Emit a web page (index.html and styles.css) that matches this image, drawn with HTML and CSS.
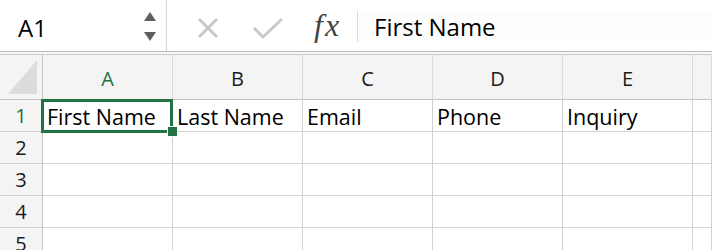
FILE: index.html
```html
<!DOCTYPE html>
<html lang="en">
  <head>
    <meta charset="UTF-8" />
    <meta name="viewport" content="width=device-width, initial-scale=1.0" />
    <title>Contact Sheet</title>
    <link rel="stylesheet" href="styles.css">
  </head>
  <body>
    <!-- Formula bar -->
    <div class="formula-bar">
      <div class="name-box">
        <span class="cell-ref">A1</span>
        <div class="stepper">
          <span class="arrow-up"></span>
          <span class="arrow-down"></span>
        </div>
      </div>
      <div class="formula-tools">
        <svg class="tool-icon" width="24" height="24" viewBox="0 0 24 24">
          <path d="M3 3 L21 21 M21 3 L3 21" stroke="#c9c9c9" stroke-width="3" fill="none" />
        </svg>
        <svg class="tool-icon check" width="32" height="24" viewBox="0 0 32 24">
          <path d="M2 12 L11 21 L30 3" stroke="#c9c9c9" stroke-width="3" fill="none" />
        </svg>
        <span class="fx">fx</span>
      </div>
      <div class="formula-input">First Name</div>
    </div>
    <div class="bar-gap"></div>

    <!-- Sheet grid -->
    <div class="sheet">
      <div class="corner"><span class="corner-mark"></span></div>
      <div class="col-head active">A</div>
      <div class="col-head">B</div>
      <div class="col-head">C</div>
      <div class="col-head">D</div>
      <div class="col-head">E</div>
      <div class="col-head"></div>

      <div class="row-head active">1</div>
      <div class="cell selected">First Name</div>
      <div class="cell">Last Name</div>
      <div class="cell">Email</div>
      <div class="cell">Phone</div>
      <div class="cell">Inquiry</div>
      <div class="cell"></div>

      <div class="row-head">2</div>
      <div class="cell"></div><div class="cell"></div><div class="cell"></div>
      <div class="cell"></div><div class="cell"></div><div class="cell"></div>

      <div class="row-head">3</div>
      <div class="cell"></div><div class="cell"></div><div class="cell"></div>
      <div class="cell"></div><div class="cell"></div><div class="cell"></div>

      <div class="row-head">4</div>
      <div class="cell"></div><div class="cell"></div><div class="cell"></div>
      <div class="cell"></div><div class="cell"></div><div class="cell"></div>

      <div class="row-head">5</div>
      <div class="cell"></div><div class="cell"></div><div class="cell"></div>
      <div class="cell"></div><div class="cell"></div><div class="cell"></div>
    </div>
  </body>
</html>
```

FILE: styles.css
```css
body {
  font-family: "Open Sans", Arial, sans-serif;
  background-color: #fff;
  color: #000;
  margin: 0;
  padding: 0;
  overflow: hidden;
}

/* Formula bar */
.formula-bar {
  display: flex;
  height: 51px;
  border-bottom: 1px solid #b9b9b9;
  background-color: #fff;
}

.name-box {
  width: 167px;
  display: flex;
  align-items: center;
  justify-content: space-between;
  padding: 0 10px 0 18px;
  box-sizing: border-box;
  border-right: 1px solid #d6d6d6;
}

.cell-ref {
  font-size: 24px;
  padding-top: 4px;
}

.stepper {
  display: flex;
  flex-direction: column;
  gap: 11px;
  padding-top: 2px;
}

.arrow-up,
.arrow-down {
  width: 0;
  height: 0;
  border-left: 6px solid transparent;
  border-right: 6px solid transparent;
}

.arrow-up {
  border-bottom: 9px solid #5e5e5e;
}

.arrow-down {
  border-top: 9px solid #5e5e5e;
}

.formula-tools {
  display: flex;
  align-items: center;
  padding-left: 29px;
  width: 190px;
  box-sizing: border-box;
}

.tool-icon {
  margin-top: 4px;
}

.check {
  margin-left: 32px;
}

.fx {
  font-family: "Liberation Serif", "Times New Roman", serif;
  font-style: italic;
  font-size: 32px;
  color: #444;
  margin-left: 30px;
  letter-spacing: 2px;
}

.formula-input {
  flex: 1;
  display: flex;
  align-items: center;
  margin: 11px 0 9px;
  padding-left: 16px;
  border-left: 1px solid #dcdcdc;
  font-size: 24px;
  background-color: #fdfdfd;
}

.bar-gap {
  height: 2px;
  border-bottom: 1px solid #c9c9c9;
  background-color: #f7f7f7;
}

/* Sheet grid */
.sheet {
  display: grid;
  grid-template-columns: 43px repeat(5, 130px) 1fr;
  grid-template-rows: 45px repeat(5, 32px);
}

.corner,
.col-head,
.row-head {
  background-color: #f4f4f4;
  color: #1a1a1a;
  display: flex;
  align-items: center;
  justify-content: center;
  font-size: 20px;
}

.corner {
  position: relative;
  border-right: 1px solid #c2c2c2;
  border-bottom: 1px solid #c2c2c2;
}

.corner-mark {
  position: absolute;
  right: 5px;
  bottom: 5px;
  width: 0;
  height: 0;
  border-left: 29px solid transparent;
  border-bottom: 34px solid #dcdcdc;
}

.col-head {
  border-right: 1px solid #dadada;
  border-bottom: 1px solid #c2c2c2;
  padding-top: 2px;
}

.row-head {
  border-right: 1px solid #c2c2c2;
  border-bottom: 1px solid #d2d2d2;
}

.col-head.active,
.row-head.active {
  color: #217346;
}

.cell {
  border-right: 1px solid #d2d2d2;
  border-bottom: 1px solid #d2d2d2;
  font-size: 21.5px;
  display: flex;
  align-items: center;
  padding: 2px 0 0 4px;
  white-space: nowrap;
}

.cell.selected {
  position: relative;
}

.cell.selected::before {
  content: "";
  position: absolute;
  left: -2px;
  top: -1px;
  right: -1px;
  bottom: -2px;
  border: 3px solid #217346;
}

.cell.selected::after {
  content: "";
  position: absolute;
  right: -6px;
  bottom: -6px;
  width: 9px;
  height: 9px;
  background-color: #217346;
  border: 1px solid #fff;
}
```
